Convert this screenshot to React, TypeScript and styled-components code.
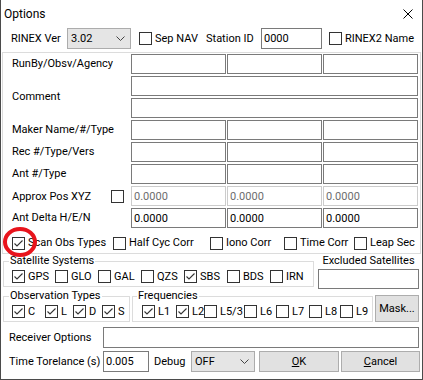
import styled, { createGlobalStyle } from "styled-components";

const GlobalStyle = createGlobalStyle`
  html, body { margin: 0; padding: 0; background: #ffffff; }
  body {
    font-family: Roboto, "Liberation Sans", sans-serif;
    font-size: 11px;
    color: #000000;
  }
  * { box-sizing: border-box; }
`;

function Check({ checked }: { checked?: boolean }) {
  return (
    <Box>
      {checked && (
        <svg width="11" height="11" viewBox="0 0 11 11">
          <polyline points="1.5,5.5 4,8 9.5,2.5" fill="none" stroke="#333" strokeWidth="1.1" />
        </svg>
      )}
    </Box>
  );
}

interface ItemProps {
  w?: number;
  checked?: boolean;
  children: string;
}
function CheckItem({ w, checked, children }: ItemProps) {
  return (
    <Item $w={w}>
      <Check checked={checked} />
      <span>{children}</span>
    </Item>
  );
}

function Chevron() {
  return (
    <svg width="9" height="5" viewBox="0 0 9 5">
      <polyline points="0.5,0.5 4.5,4.5 8.5,0.5" fill="none" stroke="#444" />
    </svg>
  );
}

export default function App() {
  return (
    <>
      <GlobalStyle />
      <Window>
        <TitleBar>
          <Title>Options</Title>
          <svg width="10" height="10" viewBox="0 0 10 10">
            <path d="M0.5 0.5 L9.5 9.5 M9.5 0.5 L0.5 9.5" stroke="#000" strokeWidth="1" />
          </svg>
        </TitleBar>

        <TopRow>
          <Label $w={56}>RINEX Ver</Label>
          <Select $w={64}>
            <span>3.02</span>
            <Chevron />
          </Select>
          <Spacer $w={8} />
          <CheckItem w={67}>Sep NAV</CheckItem>
          <Label $w={55}>Station ID</Label>
          <Field $w={61} $h={21}>0000</Field>
          <Spacer $w={7} />
          <CheckItem>RINEX2 Name</CheckItem>
        </TopRow>

        <FieldGroup>
          <FieldGrid>
            <Label>RunBy/Obsv/Agency</Label>
            <Field />
            <Field />
            <Field />

            <Label $rows={2}>Comment</Label>
            <Field $wide />
            <Field $wide />

            <Label>Maker Name/#/Type</Label>
            <Field />
            <Field />
            <Field />

            <Label>Rec #/Type/Vers</Label>
            <Field />
            <Field />
            <Field />

            <Label>Ant #/Type</Label>
            <Field />
            <Field />
            <Field />

            <ApproxLabel>
              <span>Approx Pos XYZ</span>
              <Check />
            </ApproxLabel>
            <Field $disabled>0.0000</Field>
            <Field $disabled>0.0000</Field>
            <Field $disabled>0.0000</Field>

            <Label>Ant Delta H/E/N</Label>
            <Field>0.0000</Field>
            <Field>0.0000</Field>
            <Field>0.0000</Field>
          </FieldGrid>

          <CheckRow>
            <CheckItem w={101} checked>Scan Obs Types</CheckItem>
            <CheckItem w={97}>Half Cyc Corr</CheckItem>
            <CheckItem w={74}>Iono Corr</CheckItem>
            <CheckItem w={70}>Time Corr</CheckItem>
            <CheckItem>Leap Sec</CheckItem>
          </CheckRow>
        </FieldGroup>

        <GroupRow>
          <GroupBox $w={311} $pl={8}>
            <GroupTitle $ml={-3}>Satellite Systems</GroupTitle>
            <GroupItems>
              <CheckItem w={43} checked>GPS</CheckItem>
              <CheckItem w={43}>GLO</CheckItem>
              <CheckItem w={43}>GAL</CheckItem>
              <CheckItem w={43}>QZS</CheckItem>
              <CheckItem w={43} checked>SBS</CheckItem>
              <CheckItem w={43}>BDS</CheckItem>
              <CheckItem>IRN</CheckItem>
            </GroupItems>
          </GroupBox>
          <Excluded>
            <CenterLabel>Excluded Satellites</CenterLabel>
            <Field $w={101} />
          </Excluded>
        </GroupRow>

        <GroupRow $end>
          <GroupBox $w={127} $pl={8}>
            <GroupTitle $ml={-3}>Observation Types</GroupTitle>
            <GroupItems>
              <CheckItem w={33} checked>C</CheckItem>
              <CheckItem w={28} checked>L</CheckItem>
              <CheckItem w={29} checked>D</CheckItem>
              <CheckItem checked>S</CheckItem>
            </GroupItems>
          </GroupBox>
          <GroupBox $w={241} $pl={9} $ml={2}>
            <GroupTitle $ml={-5}>Frequencies</GroupTitle>
            <GroupItems>
              <CheckItem w={34} checked>L1</CheckItem>
              <CheckItem w={28} checked>L2</CheckItem>
              <CheckItem w={40}>L5/3</CheckItem>
              <CheckItem w={32}>L6</CheckItem>
              <CheckItem w={33}>L7</CheckItem>
              <CheckItem w={31}>L8</CheckItem>
              <CheckItem>L9</CheckItem>
            </GroupItems>
          </GroupBox>
          <Button $w={44} $h={27} $ml={2}>Mask...</Button>
        </GroupRow>

        <FormRow $mt={5}>
          <Label $w={94}>Receiver Options</Label>
          <Field $w={316} $h={21} />
        </FormRow>

        <FormRow $mt={3}>
          <Label $w={94}>Time Torelance (s)</Label>
          <Field $w={46} $h={21}>0.005</Field>
          <Spacer $w={5} />
          <Label $w={37}>Debug</Label>
          <Select $w={64}>
            <span>OFF</span>
            <Chevron />
          </Select>
          <Button $w={80} $h={21} $ml={4}>
            <u>O</u>K
          </Button>
          <Button $w={79} $h={21} $ml={2}>
            <u>C</u>ancel
          </Button>
        </FormRow>

        <Marker width="40" height="32" viewBox="0 0 40 32">
          <ellipse cx="19" cy="16" rx="15" ry="13" fill="none" stroke="#e8141c" strokeWidth="4" />
        </Marker>
      </Window>
    </>
  );
}

const Window = styled.div`
  position: relative;
  width: 423px;
  height: 380px;
  border: 1px solid #4b4b4b;
  border-top: none;
  background: #ffffff;
  display: flex;
  flex-direction: column;
`;

const TitleBar = styled.div`
  height: 28px;
  display: flex;
  align-items: center;
  justify-content: space-between;
  padding: 0 9px 0 3px;
`;

const Title = styled.span`
  font-size: 12px;
`;

const TopRow = styled.div`
  display: flex;
  align-items: center;
  height: 21px;
  padding-left: 10px;
`;

const Spacer = styled.span<{ $w: number }>`
  width: ${({ $w }) => $w}px;
  flex-shrink: 0;
`;

const Label = styled.span<{ $w?: number; $rows?: number }>`
  width: ${({ $w }) => ($w ? `${$w}px` : "auto")};
  flex-shrink: 0;
  white-space: nowrap;
  line-height: 14px;
  align-self: center;
  grid-row: ${({ $rows }) => ($rows ? `span ${$rows}` : "auto")};
`;

const CenterLabel = styled.span`
  text-align: center;
  line-height: 14px;
  white-space: nowrap;
`;

const ApproxLabel = styled.div`
  display: flex;
  align-items: center;
  justify-content: space-between;
  padding-right: 6px;
`;

const Field = styled.div<{ $w?: number; $h?: number; $wide?: boolean; $disabled?: boolean }>`
  width: ${({ $w }) => ($w ? `${$w}px` : "auto")};
  height: ${({ $h }) => ($h ? `${$h}px` : "20px")};
  flex-shrink: 0;
  grid-column: ${({ $wide }) => ($wide ? "2 / span 3" : "auto")};
  display: flex;
  align-items: center;
  padding: 0 2px;
  border: 1px solid ${({ $disabled }) => ($disabled ? "#cccccc" : "#7a7a7a")};
  color: ${({ $disabled }) => ($disabled ? "#6d6d6d" : "#000000")};
  background: #ffffff;
`;

const Select = styled.div<{ $w: number }>`
  width: ${({ $w }) => $w}px;
  height: 21px;
  flex-shrink: 0;
  display: flex;
  align-items: center;
  justify-content: space-between;
  padding: 0 5px 0 3px;
  background: #e5e5e5;
  border: 1px solid #acacac;
`;

const Box = styled.span`
  width: 13px;
  height: 13px;
  flex-shrink: 0;
  display: flex;
  align-items: center;
  justify-content: center;
  border: 1px solid #333333;
  background: #ffffff;
`;

const Item = styled.label<{ $w?: number }>`
  width: ${({ $w }) => ($w ? `${$w}px` : "auto")};
  flex-shrink: 0;
  display: flex;
  align-items: center;
  gap: 3px;
  white-space: nowrap;
  line-height: 14px;
`;

const FieldGroup = styled.div`
  margin: 3px 1px 0;
  border: 1px solid #dcdcdc;
  padding: 1px 0 2px 9px;
`;

const FieldGrid = styled.div`
  display: grid;
  grid-template-columns: 118px 95px 95px 95px;
  grid-auto-rows: 20px;
  column-gap: 1px;
  row-gap: 2px;
`;

const CheckRow = styled.div`
  display: flex;
  align-items: center;
  height: 16px;
  margin-top: 7px;
`;

const GroupRow = styled.div<{ $end?: boolean }>`
  display: flex;
  align-items: ${({ $end }) => ($end ? "flex-end" : "flex-start")};
  padding-left: 2px;
`;

const GroupBox = styled.fieldset<{ $w: number; $pl: number; $ml?: number }>`
  margin: 0 0 0 ${({ $ml }) => $ml ?? 0}px;
  width: ${({ $w }) => $w}px;
  min-width: 0;
  border: 1px solid #dcdcdc;
  padding: 1px 0 2px ${({ $pl }) => $pl}px;
`;

const GroupTitle = styled.legend<{ $ml: number }>`
  padding: 0 1px;
  margin-left: ${({ $ml }) => $ml}px;
  line-height: 14px;
  font-size: 11px;
`;

const GroupItems = styled.div`
  display: flex;
  align-items: center;
  height: 15px;
`;

const Excluded = styled.div`
  display: flex;
  flex-direction: column;
  gap: 1px;
  width: 101px;
  margin-left: 4px;
`;

const FormRow = styled.div<{ $mt: number }>`
  display: flex;
  align-items: center;
  margin-top: ${({ $mt }) => $mt}px;
  padding-left: 8px;
`;

const Button = styled.button<{ $w: number; $h: number; $ml: number }>`
  width: ${({ $w }) => $w}px;
  height: ${({ $h }) => $h}px;
  margin-left: ${({ $ml }) => $ml}px;
  flex-shrink: 0;
  padding: 0;
  background: #e1e1e1;
  border: 1px solid #adadad;
  border-radius: 0;
  font-family: inherit;
  font-size: 11px;
  color: #000000;
`;

const Marker = styled.svg`
  position: absolute;
  left: 0;
  top: 226px;
  pointer-events: none;
`;
